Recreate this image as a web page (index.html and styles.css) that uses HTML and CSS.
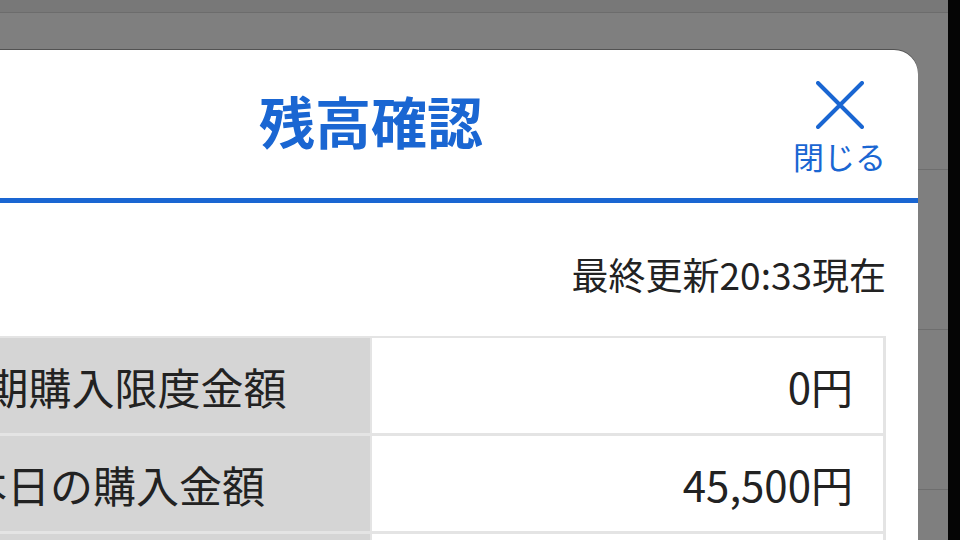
FILE: index.html
```html
<!DOCTYPE html>
<html lang="ja">
<head>
<meta charset="utf-8">
<title>残高確認</title>
<link rel="stylesheet" href="styles.css">
</head>
<body>
<div class="page">
  <div class="screen">
    <div class="topbar"></div>
    <div class="bgrow bgrow-first"></div>
    <div class="bgrow"></div>
    <div class="bgrow"></div>
    <div class="bgrow"></div>
  </div>
  <div class="edge"></div>
</div>

<div class="modal">
  <div class="modal-header">
    <div class="spacer"></div>
    <h1 class="title">残高確認</h1>
    <button class="close" type="button">
      <svg class="close-icon" width="48" height="48" viewBox="0 0 48 48" aria-hidden="true">
        <path d="M2 2 L46 46 M46 2 L2 46" fill="none" stroke="#1a66d2" stroke-width="4" stroke-linecap="round"/>
      </svg>
      <span class="close-label">閉じる</span>
    </button>
  </div>
  <div class="modal-body">
    <p class="updated">最終更新20:33現在</p>
    <div class="balance">
      <div class="cell label">当期購入限度金額</div>
      <div class="cell value">0円</div>
      <div class="cell label">本日の購入金額</div>
      <div class="cell value">45,500円</div>
      <div class="cell label">購入可能金額</div>
      <div class="cell value">0円</div>
    </div>
  </div>
</div>
</body>
</html>
```

FILE: styles.css
```css
html, body {
  margin: 0;
  padding: 0;
}

body {
  width: 960px;
  height: 540px;
  overflow: hidden;
  position: relative;
  font-family: "Noto Sans CJK JP", "Noto Sans", sans-serif;
  background: #7f7f7f;
}

.page {
  display: flex;
  width: 960px;
  height: 540px;
  overflow: hidden;
}

.screen {
  flex: 1;
  display: flex;
  flex-direction: column;
  background: #7f7f7f;
}

.topbar {
  flex-shrink: 0;
  height: 12px;
  background: #787878;
  border-bottom: 1px solid #6c6c6c;
}

.bgrow {
  flex-shrink: 0;
  height: 159px;
  border-bottom: 1px solid #6e6e6e;
}

.bgrow-first {
  height: 156px;
}

.edge {
  width: 12px;
  background: #050505;
}

.modal {
  position: absolute;
  left: -176px;
  top: 50px;
  width: 1094px;
  height: 560px;
  background: #ffffff;
  border-radius: 24px 24px 0 0;
  box-shadow: 0 -1px 0 rgba(0, 0, 0, 0.35);
}

.modal-header {
  display: grid;
  grid-template-columns: 1fr auto 1fr;
  align-items: center;
  height: 148px;
  padding: 0 32px;
  border-bottom: 5px solid #1a66d2;
}

.title {
  margin: 0 0 9px;
  font-size: 56px;
  font-weight: 700;
  line-height: 1;
  color: #1a66d2;
  letter-spacing: 0;
}

.close {
  justify-self: end;
  display: flex;
  flex-direction: column;
  align-items: center;
  gap: 11px;
  padding: 4px 0 0;
  margin: 0;
  border: 0;
  background: none;
  font-family: inherit;
  cursor: pointer;
}

.close-icon {
  display: block;
}

.close-label {
  font-size: 31px;
  line-height: 31px;
  color: #1a66d2;
}

.modal-body {
  padding: 0 32px;
}

.updated {
  margin: 44px 0 35px;
  text-align: right;
  font-size: 37px;
  line-height: 54px;
  color: #222222;
}

.balance {
  display: grid;
  grid-template-columns: 1fr 1fr;
  column-gap: 2px;
  row-gap: 3px;
  padding: 2px 3px;
  background: #e4e4e4;
}

.cell {
  height: 95px;
  display: flex;
  align-items: center;
  font-size: 42px;
  color: #222222;
}

.label {
  background: #d5d5d5;
  justify-content: center;
  font-size: 43px;
}

.value {
  background: #ffffff;
  justify-content: flex-end;
  padding-right: 30px;
}
```
